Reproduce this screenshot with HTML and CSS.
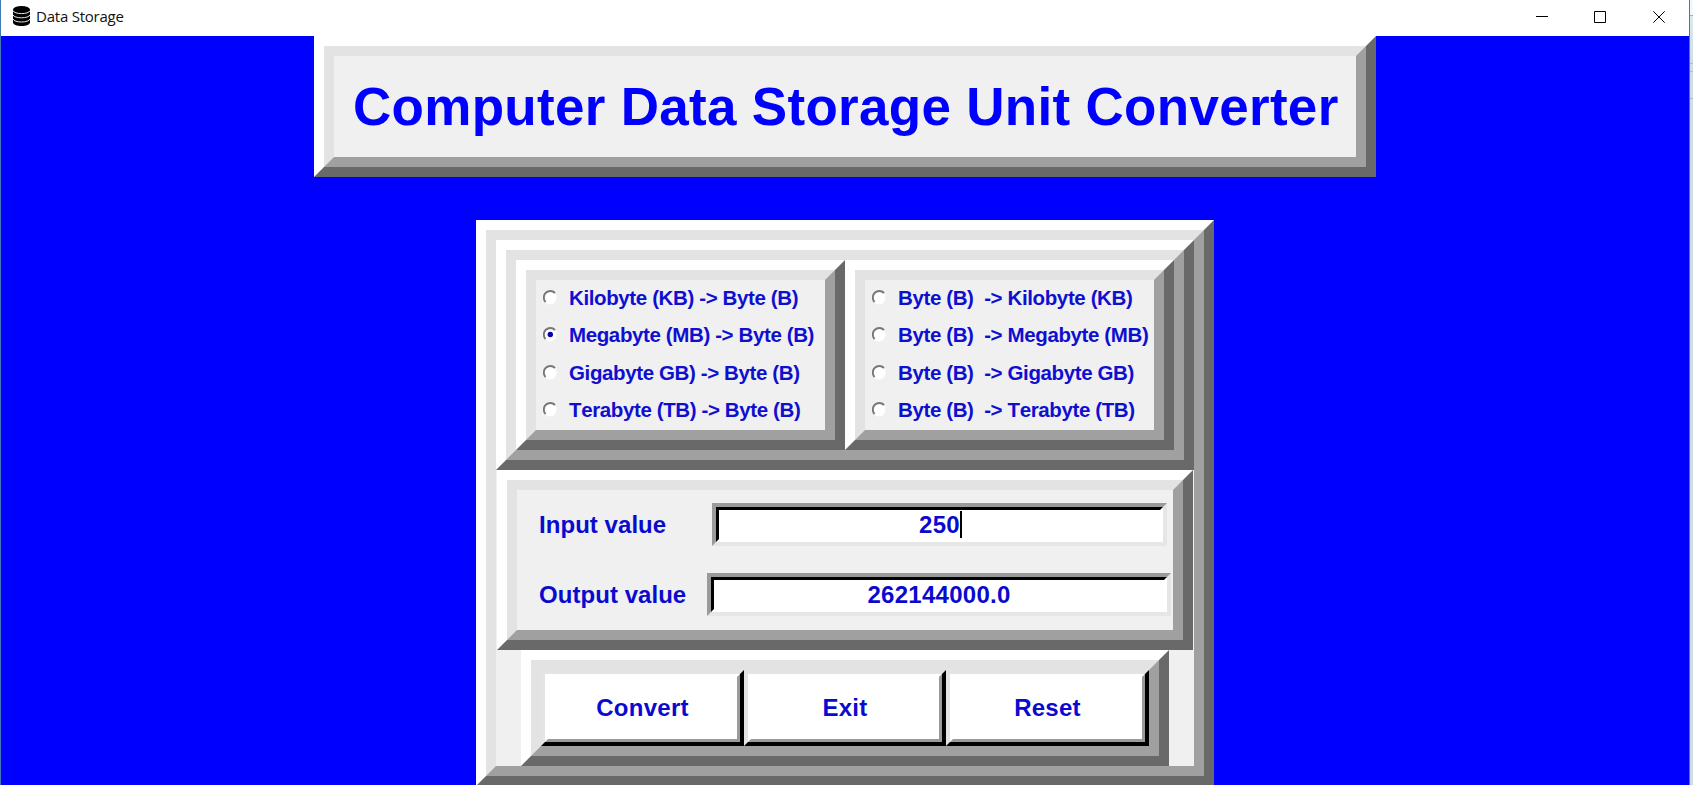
FILE: index.html
```html
<!DOCTYPE html>
<html lang="en">
<head>
<meta charset="utf-8">
<title>Data Storage</title>
<link rel="stylesheet" href="styles.css">
</head>
<body>
<svg class="defs" aria-hidden="true">
  <symbol id="radio" viewBox="0 0 14 15">
    <ellipse cx="7" cy="7.5" rx="6.5" ry="7" fill="#fff"/>
    <path d="M2.6 12A6.2 6.2 0 0 1 12 3" fill="none" stroke="#777" stroke-width="1.9"/>
  </symbol>
</svg>
<div class="window">
  <header class="titlebar">
    <svg class="app-icon" viewBox="0 0 17 20">
      <path d="M0 4v12.5C0 18.4 3.8 20 8.500 20s8.500-1.600 8.500-3.500V4z"/>
      <ellipse cx="8.500" cy="3.500" rx="8.500" ry="3.500"/>
      <path d="M0 4.600c1 4 16 4 17 0M0 8.800c1 4 16 4 17 0M0 13c1 4 16 4 17 0" fill="none" stroke="#fff" stroke-width=".9"/>
    </svg>
    <span class="app-name">Data Storage</span>
    <div class="controls">
      <svg class="minimize" viewBox="0 0 12 12"><path d="M0 5.500h12"/></svg>
      <svg viewBox="0 0 12 12"><path d="M.5.5h11v11H.5z"/></svg>
      <svg viewBox="0 0 12 12"><path d="M.3.3l11.400 11.400M11.700.3L.3 11.700"/></svg>
    </div>
  </header>
  <main class="client">
    <div class="ridge heading"><div class="ridge-inner"><h1>Computer Data Storage Unit Converter</h1></div></div>
    <div class="ridge converter"><div class="ridge-inner">
      <div class="ridge choices"><div class="ridge-inner choices-row">
        <div class="ridge group"><div class="ridge-inner options">
          <label><svg class="radio"><use href="#radio"/></svg>Kilobyte (KB) -&gt; Byte (B)</label>
          <label><svg class="radio" viewBox="0 0 14 15"><use href="#radio" width="14" height="15"/><circle cx="7.300" cy="7.500" r="2.700" fill="#0000b8"/></svg>Megabyte (MB) -&gt; Byte (B)</label>
          <label><svg class="radio"><use href="#radio"/></svg>Gigabyte GB) -&gt; Byte (B)</label>
          <label><svg class="radio"><use href="#radio"/></svg>Terabyte (TB) -&gt; Byte (B)</label>
        </div></div>
        <div class="ridge group"><div class="ridge-inner options">
          <label><svg class="radio"><use href="#radio"/></svg>Byte (B)  -&gt; Kilobyte (KB)</label>
          <label><svg class="radio"><use href="#radio"/></svg>Byte (B)  -&gt; Megabyte (MB)</label>
          <label><svg class="radio"><use href="#radio"/></svg>Byte (B)  -&gt; Gigabyte GB)</label>
          <label><svg class="radio"><use href="#radio"/></svg>Byte (B)  -&gt; Terabyte (TB)</label>
        </div></div>
      </div></div>
      <div class="ridge values"><div class="ridge-inner fields">
        <div class="field"><span class="label">Input value</span><div class="entry entry-input"><div class="entry-inner">250<i class="caret"></i></div></div></div>
        <div class="field"><span class="label">Output value</span><div class="entry entry-output"><div class="entry-inner">262144000.0</div></div></div>
      </div></div>
      <div class="ridge actions"><div class="ridge-inner buttons">
        <button><span>Convert</span></button>
        <button><span>Exit</span></button>
        <button><span>Reset</span></button>
      </div></div>
    </div></div>
  </main>
</div>
</body>
</html>
```
FILE: styles.css
```css
* { box-sizing: border-box; }

body {
  margin: 0;
  height: 785px;
  overflow: hidden;
  background: linear-gradient(#f2f7fb 15px, #9fb3c2 15px 16px, #dce8f0 16px, #cfdde8 63px, #a9bccb 63px 64px, #cfdde8 64px 71px, #a9bccb 71px 72px, #cfdde8 72px 98px, #a9bccb 98px 99px, #cfdde8 99px);
  font-family: "Liberation Sans", Arial, sans-serif;
  font-kerning: none;
}

.defs { display: none; }

.window {
  width: 1690px;
  height: 785px;
  overflow: hidden;
  display: flex;
  flex-direction: column;
  background: #fff;
  border-left: 1px solid #3f78b5;
  border-right: 1px solid #3f78b5;
}

.titlebar {
  flex: none;
  height: 36px;
  padding: 0 24px 0 12px;
  display: flex;
  align-items: center;
}

.app-icon { width: 17px; height: 20px; margin-top: -4px; }

.app-name {
  margin: -5px 0 0 6px;
  font: 15px "Open Sans", "Noto Sans", sans-serif;
  letter-spacing: -.23px;
  color: #111;
}

.controls { margin: -2px 0 0 auto; display: flex; gap: 47px; }

.controls svg {
  width: 12px;
  height: 12px;
  fill: none;
  stroke: #000;
  overflow: visible;
}

.controls .minimize { margin-right: -1px; }

.client {
  flex: none;
  height: 750px;
  background: #00f;
  display: flex;
  flex-direction: column;
  align-items: center;
}

.ridge {
  flex: none;
  border: 10px solid;
  border-color: #fff #696969 #696969 #fff;
  background: #f0f0f0;
}

.ridge-inner {
  height: 100%;
  border: 10px solid;
  border-color: #e3e3e3 #a0a0a0 #a0a0a0 #e3e3e3;
}

.heading { width: 1062px; height: 141px; }

h1 {
  margin: 0;
  padding-left: 19px;
  font-size: 53px;
  line-height: 101px;
  letter-spacing: .3px;
  color: #00f;
  white-space: nowrap;
}

.converter { width: 738px; height: 566px; margin-top: 43px; }

.converter > .ridge-inner {
  display: flex;
  flex-direction: column;
  align-items: center;
}

.choices { width: 698px; height: 230px; }
.choices-row { display: flex; }
.group { width: 329px; height: 190px; }

.options {
  display: grid;
  grid-template-rows: repeat(4, 37.5px);
  color: #0f0fd0;
  font-size: 20.5px;
  font-weight: bold;
  letter-spacing: -.38px;
  white-space: pre;
}

.options label {
  display: flex;
  align-items: center;
  padding: 0 0 2px 6.5px;
}

.radio { width: 14px; height: 15px; flex: none; margin: -1px 12.5px 0 0; }

.values { width: 696px; height: 180px; }

.fields {
  display: flex;
  flex-direction: column;
  gap: 27px;
  padding-top: 13px;
  color: #0a0acf;
  font-size: 24px;
  font-weight: bold;
  letter-spacing: .05px;
}

.field { display: flex; height: 43px; line-height: 44px; padding-left: 22px; }
.label { flex: none; }
.field:first-child { padding-right: 6px; }
.field:last-child { padding-right: 2px; }

.entry {
  height: 43px;
  margin-left: auto;
  border: 4px solid;
  border-color: #9a9a9a #e6e6e6 #e6e6e6 #9a9a9a;
}

.entry-input { width: 455px; }
.entry-output { width: 464px; }

.entry-inner {
  height: 100%;
  display: flex;
  align-items: center;
  justify-content: center;
  border: 3px solid;
  border-color: #000 #fff #fff #000;
  background: #fff;
  line-height: 29px;
  letter-spacing: .27px;
}

.caret { width: 2px; height: 27px; margin-right: -2px; background: #000; }

.actions { width: 648px; height: 116px; }
.buttons { display: grid; grid-template-columns: 203px 202px 203px; }

button {
  height: 76px;
  margin: 0;
  padding: 0;
  border: 4px solid;
  border-color: #e4e4e4 #000 #000 #e4e4e4;
  border-radius: 0;
  background: #fff;
}

button span {
  height: 100%;
  display: flex;
  align-items: center;
  justify-content: center;
  border: 3px solid;
  border-color: #fff #9a9a9a #9a9a9a #fff;
  font: bold 24px "Liberation Sans", Arial, sans-serif;
  letter-spacing: .25px;
  color: #0a0acf;
}
```
